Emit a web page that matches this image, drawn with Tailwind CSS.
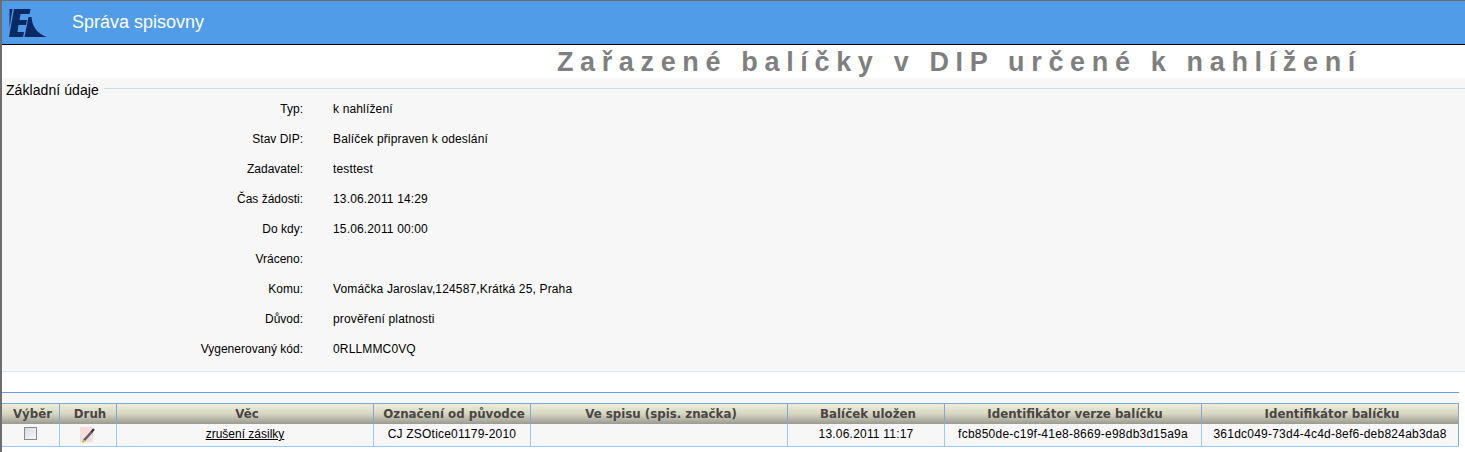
<!DOCTYPE html>
<html lang="cs"><head><meta charset="utf-8"><script src="https://cdn.jsdelivr.net/npm/@tailwindcss/browser@4"></script></head>
<body class="bg-white overflow-hidden">
<div class="w-[1465px] h-[452px] overflow-hidden border-l-2 border-t border-[#6e6e6e] font-['Liberation_Sans',Arial,sans-serif] text-black text-xs">
  <header class="h-[43px] bg-[#519ce8] border-b-[1.5px] border-black flex items-center box-content -mb-px">
    <svg class="w-[50px] h-[42px] shrink-0" viewBox="2 1 50 42"><path fill="#0a2a63" d="M9.5 8H12.5L9.5 27Z M14 8H30.5L29.5 13H20.5L19.5 19H27L26 24H18.5L17.5 31H24L23 36H9Z M28.5 16H31.5C32 26 38 33 47 36H24.5Z"/></svg>
    <span class="ml-[20px] text-lg text-white leading-none mt-[-1px]">Správa spisovny</span>
  </header>
  <h1 class="h-[34px] flex items-center justify-end pt-[2px] pr-[103px] text-[27px] font-bold tracking-[0.2465em] text-[#7f7f7f] whitespace-nowrap leading-none">Zařazené balíčky v DIP určené k nahlížení</h1>
  <section class="h-[294px] bg-[#f7f7f7] border-b border-[#dce4f0]">
    <div class="flex items-start h-[16px]">
      <span class="pl-1 pr-[5px] pt-[4px] text-sm leading-4 tracking-[0.07px]">Základní údaje</span>
      <div class="flex-1 h-px mt-[10px] bg-[#c9ddf5]"></div>
    </div>
    <dl class="grid grid-cols-[301px_1fr] auto-rows-[30px] items-center">
      <dt class="text-right">Typ:</dt><dd class="pl-[30px] tracking-[0.15px]">k nahlížení</dd>
      <dt class="text-right">Stav DIP:</dt><dd class="pl-[30px] tracking-[0.15px]">Balíček připraven k odeslání</dd>
      <dt class="text-right">Zadavatel:</dt><dd class="pl-[30px] tracking-[0.15px]">testtest</dd>
      <dt class="text-right">Čas žádosti:</dt><dd class="pl-[30px] tracking-[0.15px]">13.06.2011 14:29</dd>
      <dt class="text-right">Do kdy:</dt><dd class="pl-[30px] tracking-[0.15px]">15.06.2011 00:00</dd>
      <dt class="text-right">Vráceno:</dt><dd class="pl-[30px] tracking-[0.15px]"></dd>
      <dt class="text-right">Komu:</dt><dd class="pl-[30px] tracking-[0.15px]">Vomáčka Jaroslav,124587,Krátká 25, Praha</dd>
      <dt class="text-right">Důvod:</dt><dd class="pl-[30px] tracking-[0.15px]">prověření platnosti</dd>
      <dt class="text-right">Vygenerovaný kód:</dt><dd class="pl-[30px] tracking-[0.15px]">0RLLMMC0VQ</dd>
    </dl>
  </section>
  <section class="mt-[20px] w-[1457px] bg-[#f7f7f7] border-t border-[#6a9fdc] pt-[10px]">
    <div class="border-b-[1.5px] border-[#9cc8f5]">
      <div class="grid grid-cols-[58px_57px_257px_157px_257px_157px_257px_257px] h-[21px] border-t border-[#7fa9dc] bg-gradient-to-b from-[#eeeeda] via-[#d6d5c0] to-[#9a9a92] font-['DejaVu_Sans','Liberation_Sans',sans-serif] font-bold text-[#4a4545] text-[11.8px] leading-[21px] text-center whitespace-nowrap">
        <div class="border-r border-[#7fa9dc] pl-[4px]">Výběr</div>
        <div class="border-r border-[#7fa9dc] pl-[4px]">Druh</div>
        <div class="border-r border-[#7fa9dc] pl-[4px]">Věc</div>
        <div class="border-r border-[#7fa9dc] pl-[4px]">Označení od původce</div>
        <div class="border-r border-[#7fa9dc] pl-[4px]">Ve spisu (spis. značka)</div>
        <div class="border-r border-[#7fa9dc] pl-[4px]">Balíček uložen</div>
        <div class="border-r border-[#7fa9dc] pl-[4px]">Identifikátor verze balíčku</div>
        <div class="border-r border-[#7fa9dc] pl-[4px]">Identifikátor balíčku</div>
      </div>
      <div class="grid grid-cols-[58px_57px_257px_157px_257px_157px_257px_257px] h-[22px] items-stretch text-center whitespace-nowrap leading-[21px]">
        <div class="border-r border-[#9cc8f5] flex justify-center pt-[3px]"><span class="block w-[13px] h-[13px] border border-[#8a8a8a] bg-gradient-to-br from-[#d5dbe6] to-[#f7f8fa]"></span></div>
        <div class="border-r border-[#9cc8f5] flex justify-center pt-[2px] pr-[1px]"><svg class="w-[16px] h-[17px]" viewBox="0 0 16 17"><rect x="0" y="1" width="13" height="15" fill="#f7dcdc"/><rect x="0" y="11" width="11" height="5" fill="#e2e2e2"/><path d="M4 14.5L12 5.5" stroke="#5f5f5f" stroke-width="2.6"/><path d="M2.5 16.5L4.5 14" stroke="#e0b020" stroke-width="2"/><path d="M11.5 6L14 3" stroke="#333" stroke-width="2.2"/></svg></div>
        <div class="border-r border-[#9cc8f5]"><a class="underline text-black" href="#">zrušení zásilky</a></div>
        <div class="border-r border-[#9cc8f5] tracking-[0.2px]">CJ ZSOtice01179-2010</div>
        <div class="border-r border-[#9cc8f5]"></div>
        <div class="border-r border-[#9cc8f5] tracking-[0.2px]">13.06.2011 11:17</div>
        <div class="border-r border-[#9cc8f5] tracking-[0.23px]">fcb850de-c19f-41e8-8669-e98db3d15a9a</div>
        <div class="border-r border-[#7fa9dc] tracking-[0.23px]">361dc049-73d4-4c4d-8ef6-deb824ab3da8</div>
      </div>
    </div>
  </section>
</div>
</body></html>
